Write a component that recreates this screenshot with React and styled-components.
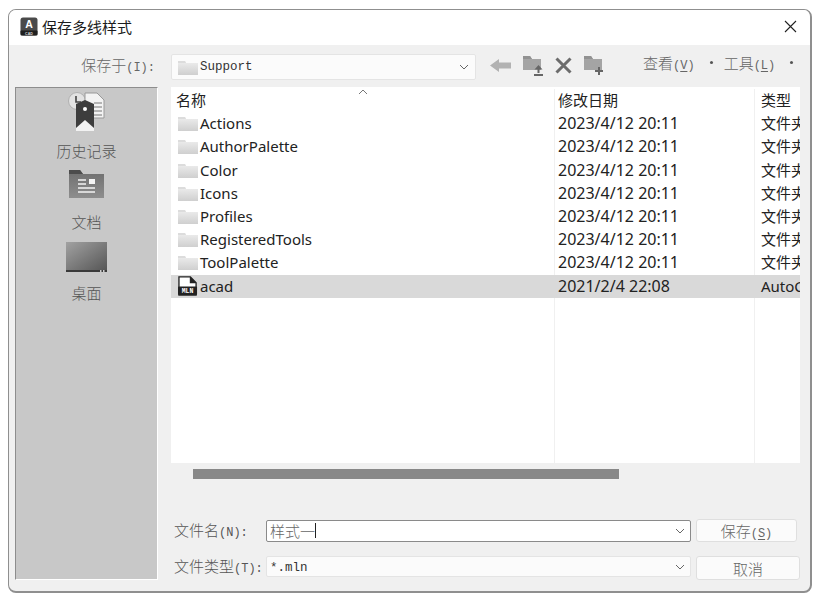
import React from 'react';
import styled, { createGlobalStyle } from 'styled-components';

const GlobalStyle = createGlobalStyle`
  html, body {
    margin: 0;
    padding: 0;
    background: #fff;
  }
`;

const uiFont = '"Noto Sans", "Noto Sans CJK SC", sans-serif';
const labelFont = '"Noto Sans CJK SC", "Liberation Serif", serif';
const monoFont = '"Liberation Mono", "Noto Sans CJK SC", monospace';

const Page = styled.div`
  width: 816px;
  height: 597px;
  padding: 9px 4px 4px 8px;
  box-sizing: border-box;
`;

const Window = styled.div`
  width: 804px;
  height: 584px;
  box-sizing: border-box;
  border: 1px solid #8f8f8f;
  border-bottom-width: 2px;
  border-right-width: 2px;
  border-radius: 8px;
  overflow: hidden;
  display: flex;
  flex-direction: column;
  background: #f0f0f0;
`;

const TitleBar = styled.div`
  height: 35px;
  flex: none;
  box-sizing: border-box;
  background: #fff;
  display: flex;
  align-items: center;
  padding: 0 13px 2px 11px;
  gap: 4px;
`;

const TitleText = styled.span`
  flex: 1;
  font: 15px ${uiFont};
  color: #1c1c1c;
`;

const Body = styled.div`
  flex: 1;
  display: grid;
  grid-template-columns: 143px 1fr;
  grid-template-rows: 42px 1fr;
  column-gap: 13px;
  padding: 0 10px 12px 6px;
  min-height: 0;
`;

const SaveInLabel = styled.div`
  font: 300 15px/20px ${labelFont};
  color: #666;
  text-align: right;
  padding: 10px 3px 0 0;
  white-space: nowrap;
`;

const Latin = styled.span`
  font: 12px ${monoFont};
`;

const Toolbar = styled.div`
  display: flex;
  align-items: center;
  padding-top: 2px;
`;

const Combo = styled.div`
  width: 305px;
  height: 26px;
  box-sizing: border-box;
  flex: none;
  background: #fbfbfb;
  border: 1px solid #e4e4e4;
  border-radius: 2px;
  display: flex;
  align-items: center;
  padding: 0 6px;
  gap: 2px;
  font: 12.5px ${monoFont};
  color: #333;
`;

const ComboText = styled.span`
  flex: 1;
`;

const ToolIcons = styled.div`
  display: flex;
  align-items: center;
  gap: 12px;
  margin: -3px 0 0 14px;
  width: 153px;
  flex: none;
`;

const MenuItem = styled.span`
  font: 300 15px ${labelFont};
  color: #666;
  margin-right: ${({ $gap }) => $gap}px;
  margin-top: -10px;
  white-space: nowrap;

  u {
    text-underline-offset: 2px;
  }
`;

const MenuDot = styled.span`
  width: 3px;
  height: 3px;
  background: #555;
  border-radius: 50%;
  margin-right: ${({ $gap }) => $gap}px;
  margin-top: -10px;
  flex: none;
`;

const Sidebar = styled.div`
  background: #c8c8c8;
  border: 1px solid #8d8d8d;
  border-bottom-color: #fff;
  border-right-color: #fff;
  box-sizing: border-box;
  display: flex;
  flex-direction: column;
  align-items: center;
`;

const PlaceIcon = styled.div`
  height: ${({ $h }) => $h}px;
  margin-top: ${({ $top }) => $top}px;
  display: flex;
  align-items: flex-end;
`;

const PlaceLabel = styled.div`
  font: 300 15px/20px ${labelFont};
  color: #555;
  margin-top: ${({ $top }) => $top}px;
`;

const RightColumn = styled.div`
  display: flex;
  flex-direction: column;
  min-width: 0;
`;

const FileList = styled.div`
  height: 376px;
  flex: none;
  background: #fff;
  overflow: hidden;
  padding-top: 2px;
  box-sizing: border-box;
`;

const Row = styled.div`
  display: grid;
  grid-template-columns: 384px 200px 45px;
  height: 23.2px;
  align-items: stretch;
  background: ${({ $selected }) => ($selected ? '#d9d9d9' : 'transparent')};
  font: 15px/23px ${uiFont};
  color: #222;
`;

const NameCell = styled.div`
  display: flex;
  align-items: center;
  padding-left: ${({ $header }) => ($header ? 5 : 7)}px;
  gap: 2px;
  position: relative;
  border-right: 1px solid ${({ $selected }) => ($selected ? '#d9d9d9' : '#f0f0f0')};
`;

const DateCell = styled.div`
  padding-left: 3px;
  white-space: nowrap;
  font-size: ${({ $header }) => ($header ? 15 : 16)}px;
  border-right: 1px solid ${({ $selected }) => ($selected ? '#d9d9d9' : '#f0f0f0')};
`;

const TypeCell = styled.div`
  padding-left: 6px;
  white-space: nowrap;
  overflow: hidden;
`;

const SortCaret = styled.svg`
  position: absolute;
  left: 187px;
  top: 0;
`;

const Filler = styled.div`
  height: 100%;
  display: grid;
  grid-template-columns: 384px 200px;
`;

const FillerCell = styled.div`
  border-right: 1px solid #f0f0f0;
`;

const ScrollTrack = styled.div`
  height: 50px;
  flex: none;
  padding: 6px 0 0 22px;
  box-sizing: border-box;
`;

const ScrollThumb = styled.div`
  width: 426px;
  height: 10px;
  background: #888;
`;

const FormRow = styled.div`
  display: flex;
  align-items: center;
  height: ${({ $h }) => $h}px;
  margin-top: ${({ $top }) => $top || 0}px;
  flex: none;
`;

const FieldLabel = styled.div`
  width: 95px;
  flex: none;
  padding-left: 3px;
  box-sizing: border-box;
  font: 300 15px ${labelFont};
  color: #555;
  white-space: nowrap;
  margin-top: ${({ $shift }) => $shift || 0}px;
`;

const Field = styled.div`
  width: 425px;
  height: ${({ $focused }) => ($focused ? 22 : 21)}px;
  box-sizing: border-box;
  flex: none;
  align-self: ${({ $focused }) => ($focused ? 'center' : 'flex-start')};
  background: ${({ $focused }) => ($focused ? '#fff' : '#fbfbfb')};
  border: 1px solid ${({ $focused }) => ($focused ? '#8a8a8a' : '#e4e4e4')};
  border-radius: 2px;
  display: flex;
  align-items: center;
  padding: 0 5px 0 3px;
`;

const FieldText = styled.span`
  flex: 1;
  font: ${({ $mono }) => ($mono ? `12.5px ${monoFont}` : `300 15px ${labelFont}`)};
  color: ${({ $mono }) => ($mono ? '#333' : '#666')};
  padding-top: ${({ $mono }) => ($mono ? 2 : 0)}px;
  display: flex;
  align-items: center;
`;

const Caret = styled.span`
  width: 1px;
  height: 15px;
  background: #222;
`;

const Button = styled.button`
  width: ${({ $w }) => $w}px;
  height: ${({ $h }) => $h}px;
  margin-left: 5px;
  flex: none;
  box-sizing: border-box;
  background: #fbfbfb;
  border: 1px solid #dfdfdf;
  border-radius: 3px;
  font: 300 15px ${labelFont};
  color: #666;
  padding: 0;

  u {
    text-underline-offset: 2px;
  }
`;

const FolderIcon = () => (
  <svg width="20" height="15" viewBox="0 0 20 15">
    <defs>
      <linearGradient id="folderFill" x1="0" y1="0" x2="0" y2="1">
        <stop offset="0" stopColor="#eeeeee" />
        <stop offset="1" stopColor="#cfcfcf" />
      </linearGradient>
    </defs>
    <path d="M0 1h7l1 2h12v12H0z" fill="url(#folderFill)" />
    <path d="M0 1h7l1 2H0z" fill="#dcdcdc" />
  </svg>
);

const Chevron = () => (
  <svg width="10" height="6" viewBox="0 0 10 6">
    <path d="M1 1l4 4 4-4" fill="none" stroke="#666" strokeWidth="1" />
  </svg>
);

const AppIcon = () => (
  <svg width="18" height="19" viewBox="0 0 18 19">
    <rect x="0.5" y="0.5" width="17" height="18" rx="2.5" fill="#4a4a4a" />
    <rect x="0.5" y="13.5" width="17" height="5" rx="1" fill="#1f1f1f" />
    <text x="9" y="11" fontSize="10.5" fontWeight="700" textAnchor="middle" fill="#fff" fontFamily="Liberation Sans, sans-serif">A</text>
    <text x="9" y="17.6" fontSize="3.6" fontWeight="700" textAnchor="middle" fill="#ddd" fontFamily="Liberation Sans, sans-serif">CAD</text>
  </svg>
);

const CloseIcon = () => (
  <svg width="13" height="13" viewBox="0 0 13 13">
    <path d="M1 1l11 11M12 1L1 12" stroke="#222" strokeWidth="1.1" fill="none" />
  </svg>
);

const BackIcon = () => (
  <svg width="21" height="13" viewBox="0 0 21 13">
    <path d="M0 6.5L9 0v3.5h12v6H9V13z" fill="#b2b2b2" />
  </svg>
);

const UpFolderIcon = () => (
  <svg width="20" height="20" viewBox="0 0 20 20">
    <path d="M0 0h7l2 3h9v11H0z" fill="#a4a4a4" />
    <path d="M0 0h7l2 3H0z" fill="#929292" />
    <path d="M11 18h9v2h-9zM15.5 9l-4 4.5h3V17h2v-3.5h3z" fill="#666" />
  </svg>
);

const DeleteIcon = () => (
  <svg width="17" height="17" viewBox="0 0 17 17">
    <path d="M1.5 1.5l14 14M15.5 1.5l-14 14" stroke="#6c6c6c" strokeWidth="3" fill="none" />
  </svg>
);

const NewFolderIcon = () => (
  <svg width="20" height="20" viewBox="0 0 20 20">
    <path d="M0 0h7l2 3h9v11H0z" fill="#a4a4a4" />
    <path d="M0 0h7l2 3H0z" fill="#929292" />
    <path d="M14 11h2v3h3v2h-3v3h-2v-3h-3v-2h3z" fill="#666" />
  </svg>
);

const HistoryIcon = () => (
  <svg width="39" height="39" viewBox="0 0 39 39">
    <circle cx="10" cy="9" r="8.5" fill="#e2e2e2" stroke="#b0b0b0" />
    <path d="M9 4v6h5" fill="none" stroke="#444" strokeWidth="1.6" />
    <path d="M18 1h12l7 7v18H18z" fill="#f3f3f3" stroke="#999" />
    <path d="M27 11h8M27 15h8M27 19h8M27 23h8" stroke="#777" />
    <path d="M9 12l9-4 9 4v27H9z" fill="#3d3d3d" />
    <circle cx="18" cy="17" r="2" fill="#fff" />
    <path d="M9 36l9-8 9 8v3H9z" fill="#f2f2f2" />
  </svg>
);

const DocsIcon = () => (
  <svg width="35" height="28" viewBox="0 0 35 28">
    <defs>
      <linearGradient id="docsFill" x1="0" y1="0" x2="0" y2="1">
        <stop offset="0" stopColor="#6e6e6e" />
        <stop offset="1" stopColor="#8e8e8e" />
      </linearGradient>
    </defs>
    <path d="M0 0h11l3 4h21v24H0z" fill="url(#docsFill)" />
    <path d="M0 0h11l3 4H0z" fill="#4c4c4c" />
    <path d="M9 10h8M9 14h8M9 18h17M9 22h17" stroke="#f4f4f4" strokeWidth="1.4" />
    <rect x="20" y="9" width="6" height="5" fill="#f4f4f4" />
  </svg>
);

const DesktopIcon = () => (
  <svg width="41" height="30" viewBox="0 0 41 30">
    <defs>
      <linearGradient id="deskFill" x1="0" y1="0" x2="1" y2="1">
        <stop offset="0" stopColor="#a2a2a2" />
        <stop offset="1" stopColor="#555" />
      </linearGradient>
    </defs>
    <rect width="41" height="29" fill="url(#deskFill)" />
    <rect y="28" width="41" height="2" fill="#3a3a3a" />
    <path d="M34 28h1.5v2H34zM37 28h1.5v2H37z" fill="#ccc" />
  </svg>
);

const MlnIcon = () => (
  <svg width="20" height="20" viewBox="0 0 21 21">
    <path d="M1 1h12l6 6v13H1z" fill="#fff" stroke="#222" strokeWidth="1.4" />
    <path d="M13 1v6h6" fill="#222" stroke="#222" strokeWidth="1.2" />
    <rect x="0" y="11" width="20" height="9" rx="1" fill="#222" />
    <text x="10" y="18.2" fontSize="6.8" fontWeight="700" textAnchor="middle" fill="#fff" fontFamily="Liberation Mono, monospace">MLN</text>
  </svg>
);

const folders = [
  'Actions',
  'AuthorPalette',
  'Color',
  'Icons',
  'Profiles',
  'RegisteredTools',
  'ToolPalette',
];

const FileRow = ({ name, date, type, icon, selected }) => (
  <Row $selected={selected}>
    <NameCell $selected={selected}>
      {icon}
      {name}
    </NameCell>
    <DateCell $selected={selected}>{date}</DateCell>
    <TypeCell>{type}</TypeCell>
  </Row>
);

export default function App() {
  return (
    <Page>
      <GlobalStyle />
      <Window>
        <TitleBar>
          <AppIcon />
          <TitleText>保存多线样式</TitleText>
          <CloseIcon />
        </TitleBar>
        <Body>
          <SaveInLabel>保存于<Latin>(I):</Latin></SaveInLabel>
          <Toolbar>
            <Combo>
              <FolderIcon />
              <ComboText>Support</ComboText>
              <Chevron />
            </Combo>
            <ToolIcons>
              <BackIcon />
              <UpFolderIcon />
              <DeleteIcon />
              <NewFolderIcon />
            </ToolIcons>
            <MenuItem $gap={15}>查看<Latin>(<u>V</u>)</Latin></MenuItem>
            <MenuDot $gap={11} />
            <MenuItem $gap={15}>工具<Latin>(<u>L</u>)</Latin></MenuItem>
            <MenuDot $gap={0} />
          </Toolbar>
          <Sidebar>
            <PlaceIcon $h={39} $top={4}><HistoryIcon /></PlaceIcon>
            <PlaceLabel $top={10}>历史记录</PlaceLabel>
            <PlaceIcon $h={28} $top={9}><DocsIcon /></PlaceIcon>
            <PlaceLabel $top={14}>文档</PlaceLabel>
            <PlaceIcon $h={30} $top={10}><DesktopIcon /></PlaceIcon>
            <PlaceLabel $top={11}>桌面</PlaceLabel>
          </Sidebar>
          <RightColumn>
            <FileList>
              <Row>
                <NameCell $header>
                  名称
                  <SortCaret width="10" height="6" viewBox="0 0 10 6">
                    <path d="M1 5l4-4 4 4" fill="none" stroke="#777" />
                  </SortCaret>
                </NameCell>
                <DateCell $header>修改日期</DateCell>
                <TypeCell>类型</TypeCell>
              </Row>
              {folders.map((name) => (
                <FileRow
                  key={name}
                  name={name}
                  date="2023/4/12 20:11"
                  type="文件夹"
                  icon={<FolderIcon />}
                />
              ))}
              <FileRow
                name="acad"
                date="2021/2/4 22:08"
                type="AutoCAD"
                icon={<MlnIcon />}
                selected
              />
              <Filler>
                <FillerCell />
                <FillerCell />
              </Filler>
            </FileList>
            <ScrollTrack>
              <ScrollThumb />
            </ScrollTrack>
            <FormRow $h={35}>
              <FieldLabel $shift={-2}>文件名<Latin>(N):</Latin></FieldLabel>
              <Field $focused>
                <FieldText>样式一<Caret /></FieldText>
                <Chevron />
              </Field>
              <Button $w={101} $h={23}>保存<Latin>(<u>S</u>)</Latin></Button>
            </FormRow>
            <FormRow $h={24} $top={8}>
              <FieldLabel $shift={-6}>文件类型<Latin>(T):</Latin></FieldLabel>
              <Field>
                <FieldText $mono>*.mln</FieldText>
                <Chevron />
              </Field>
              <Button $w={104} $h={24}>取消</Button>
            </FormRow>
          </RightColumn>
        </Body>
      </Window>
    </Page>
  );
}
